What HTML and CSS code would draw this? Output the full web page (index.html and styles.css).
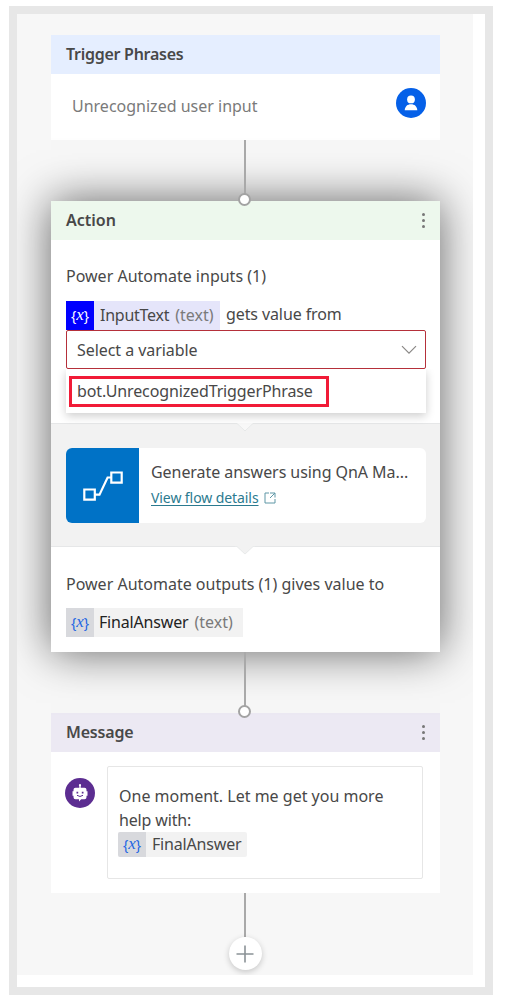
FILE: index.html
```
<!DOCTYPE html>
<html lang="en">
<head>
<meta charset="utf-8">
<title>Authoring canvas</title>
<link rel="stylesheet" href="styles.css">
</head>
<body>
<main class="frame">
  <div class="canvas">
    <section class="card trigger">
      <header class="card-head head-blue"><h2 class="t-trigger">Trigger Phrases</h2></header>
      <div class="trigger-body">
        <span class="t-unrec">Unrecognized user input</span>
        <svg class="avatar" viewBox="0 0 30 30"><circle cx="15" cy="15" r="15" fill="#0560e8"/><circle cx="15" cy="11.400" r="3.900" fill="#fff"/><path d="M8.700 22.200c.3-3.900 2.700-6 6.300-6s6 2.100 6.300 6z" fill="#fff"/></svg>
      </div>
    </section>
    <div class="link"><i class="dot"></i></div>
    <section class="card action">
      <header class="card-head head-green"><h2 class="t-action">Action</h2><span class="more"><i></i><i></i><i></i></span></header>
      <div class="inputs">
        <p class="label">Power Automate inputs (1)</p>
        <div class="assign">
          <span class="chip chip-blue"><b class="fx">{<em>x</em>}</b><span class="name t-input">InputText</span><span class="type">(text)</span></span>
          <span class="t-gets">gets value from</span>
        </div>
        <div class="select"><span class="t-select">Select a variable</span><svg class="chevron" viewBox="0 0 16 10"><path d="M1 1.200l7 7 7-7" fill="none" stroke="#8a8886" stroke-width="1.200"/></svg></div>
        <div class="options"><div class="option"><span class="t-bot">bot.UnrecognizedTriggerPhrase</span></div></div>
      </div>
      <div class="flow">
        <svg class="notch" viewBox="0 0 20 9"><path d="M1 0h18l-9 8.500z" fill="#f8f8f8"/><path d="M0 .5h2l8 7.500 8-7.500h2" fill="none" stroke="#e6e8e8"/></svg>
        <div class="flow-card">
          <div class="flow-icon"><svg viewBox="0 0 40 30"><g fill="none" stroke="#fff" stroke-width="2.200"><path d="M1.300 18.500h10.500v10.200h-10.500zM28.300 1.500h10.400v10.200h-10.400z"/><path d="M12 23.700h4.500L24.600 6.500h3.600"/></g></svg></div>
          <div class="flow-text">
            <span class="t-gen">Generate answers using QnA Ma...</span>
            <span class="details"><a class="t-view">View flow details</a><svg class="ext" viewBox="0 0 12 12"><path d="M5 1H1v10h10V7M6 1h5v4.500M11 1L6 6" fill="none" stroke="#5f97a6"/></svg></span>
          </div>
        </div>
        <svg class="notch notch-low" viewBox="0 0 20 9"><path d="M1 0h18l-9 8.500z" fill="#f2f2f2"/><path d="M0 .5h2l8 7.500 8-7.500h2" fill="none" stroke="#e9ebeb"/></svg>
      </div>
      <div class="outputs">
        <p class="label">Power Automate outputs (1) gives value to</p>
        <span class="chip chip-gray"><b class="fx">{<em>x</em>}</b><span class="name t-final">FinalAnswer</span><span class="type">(text)</span></span>
      </div>
    </section>
    <div class="link"><i class="dot"></i></div>
    <section class="card message">
      <header class="card-head head-violet"><h2 class="t-message">Message</h2><span class="more"><i></i><i></i><i></i></span></header>
      <div class="message-body">
        <svg class="bot" viewBox="0 0 30 30"><circle cx="15" cy="15" r="15" fill="#5c2d91"/><path d="M14.300 7h1.400v3h-1.400z" fill="#fff"/><circle cx="15" cy="7.200" r="1.100" fill="#fff"/><path d="M10.500 9.800h9a2 2 0 0 1 2 2v1.500h1v4.500h-1v1.500a2 2 0 0 1-2 2h-3.300L14 23.500v-2.200h-3.500a2 2 0 0 1-2-2v-1.500h-1v-4.500h1v-1.500a2 2 0 0 1 2-2z" fill="#fff"/><path d="M11.500 13.800h1.700v1.700h-1.700zM16.800 13.800h1.700v1.700h-1.700z" fill="#5c2d91"/><path d="M12 17.300q3 2.400 6 0" fill="none" stroke="#5c2d91"/></svg>
        <div class="bubble">
          <span class="t-one">One moment. Let me get you more</span>
          <span class="t-help">help with:</span>
          <span class="chip chip-small"><b class="fx">{<em>x</em>}</b><span class="name t-final">FinalAnswer</span></span>
        </div>
      </div>
    </section>
    <div class="link link-end"></div>
    <div class="add"><svg viewBox="0 0 18 18"><path d="M9 .5v17M.5 9h17" stroke="#8b9296" stroke-width="1.600"/></svg></div>
  </div>
</main>
</body>
</html>
```
FILE: styles.css
```
* { box-sizing: border-box; }
body { margin: 0; background: #fff; color: #484848; font-family: "Noto Sans", "Open Sans", sans-serif; font-size: 16px; line-height: 24px; white-space: nowrap; }
h2, p { margin: 0; }
svg { display: block; }
.frame { width: 484px; height: 989px; margin: 6px 0 0 9px; border: 8px solid #e7e7e7; }
.canvas { width: 456px; height: 961px; padding: 21px 33px 0 34px; background: #f7f7f7; overflow: hidden; display: flex; flex-direction: column; }
.card { background: #fff; width: 389px; flex: none; }
.card-head { height: 39px; padding: 0 15px 1px; display: flex; align-items: center; justify-content: space-between; }
.card-head h2 { font-size: 16px; font-weight: 600; }
.t-trigger { letter-spacing: -.27px; }
.t-message { letter-spacing: -.18px; }
.t-input { letter-spacing: -.25px; }
.t-gets { letter-spacing: -.1px; }
.t-select { letter-spacing: -.06px; }
.t-bot { letter-spacing: -.13px; }
.t-gen { letter-spacing: -.06px; }
.t-help { letter-spacing: -.15px; }
.t-final { letter-spacing: -.18px; }
.head-blue { background: #e5eeff; }
.head-green { background: #edf8ed; }
.head-violet { background: #ece9f3; }
.trigger { height: 105px; }
.trigger-body { display: flex; justify-content: space-between; padding: 14px 14px 0 21px; color: #7a7a7a; }
.trigger-body span { padding-top: 6px; }
.avatar { width: 30px; height: 30px; }
.link { height: 61px; flex: none; width: 2px; margin-left: 193px; background: #a9a9a9; position: relative; z-index: 2; }
.dot { position: absolute; left: -6px; bottom: -5px; width: 13px; height: 13px; border: 2px solid #a3a3a3; border-radius: 50%; background: #fff; }
.more { display: flex; flex-direction: column; gap: 3px; }
.more i { width: 3px; height: 3px; border-radius: 50%; background: #777; }
.action { height: 451px; box-shadow: 0 0 42px rgba(0, 0, 0, .6); position: relative; }
.inputs { height: 183px; padding: 24px 14px 0 15px; }
.assign { display: flex; align-items: center; gap: 6px; margin-top: 13px; }
.t-gets { padding-bottom: 3px; }
.chip { display: inline-flex; align-items: center; height: 29px; }
.fx { align-self: stretch; width: 28px; display: grid; grid-auto-flow: column; place-content: center; font: 14px/1 "Noto Sans", sans-serif; }
.fx em { font-family: "Liberation Serif", serif; font-size: 17px; line-height: 12px; }
.chip .name, .chip .type { margin-left: 6px; padding-bottom: 2px; }
.chip .type { color: #7a7a7a; }
.chip-blue { width: 154px; background: #e5e5fa; }
.chip-blue .fx { background: #00f; color: #fff; }
.select { height: 39px; border: 1px solid #b5303a; border-radius: 2px; padding: 0 8px 0 10px; display: flex; align-items: center; justify-content: space-between; }
.chevron { width: 16px; height: 10px; }
.options { position: relative; height: 44px; background: #fff; padding: 7px 3px; box-shadow: 0 3px 9px rgba(0, 0, 0, .2); clip-path: inset(0 -14px -16px -14px); z-index: 3; }
.option { width: 260px; height: 31px; border: 3px solid #f11b37; padding: 0 0 2px 5px; display: flex; align-items: center; }
.flow { position: relative; height: 124px; padding: 24px 14px 0 15px; background: #f2f2f2; border-top: 1px solid #e6e7e8; border-bottom: 1px solid #e6e7e8; }
.notch { position: absolute; left: 184px; top: -1px; width: 20px; height: 9px; }
.notch-low { top: 122px; }
.flow-card { height: 75px; background: #fff; border-radius: 6px; display: flex; overflow: hidden; }
.flow-icon { width: 73px; background: #0072c6; display: grid; place-items: center; }
.flow-icon svg { width: 40px; height: 30px; }
.flow-text { padding: 12px 0 0 12px; display: flex; flex-direction: column; gap: 2px; }
.details { display: flex; align-items: center; gap: 5px; font-size: 14px; letter-spacing: -.08px; }
.t-view { color: #2b7a8f; text-decoration: underline; text-underline-offset: 2px; }
.ext { width: 12px; height: 12px; }
.outputs { padding: 25px 15px 0; }
.outputs .chip { margin-top: 12px; width: 177px; }
.chip-gray, .chip-small { background: #f2f2f2; }
.chip-gray .name { color: #222; margin-left: 5px; }
.chip-gray .fx, .chip-small .fx { background: #d8d9dd; color: #2266e3; }
.message { height: 180px; }
.message-body { display: flex; gap: 12px; padding: 14px 17px 0 14px; align-items: flex-start; }
.bot { width: 30px; height: 30px; margin-top: 12px; }
.bubble { flex: 1; height: 113px; border: 1.500px solid #e6e6e6; border-radius: 2px; padding: 17px 0 0 10px; display: flex; flex-direction: column; align-items: flex-start; }
.t-one, .t-help { margin-left: 1px; }
.chip-small { height: 25px; width: 129px; border-radius: 2px; overflow: hidden; }
.link-end { height: 44px; }
.add { width: 33px; height: 33px; flex: none; margin-left: 177.500px; border-radius: 50%; background: #fff; box-shadow: 0 2px 6px rgba(0, 0, 0, .2); display: grid; place-items: center; position: relative; z-index: 3; }
.add svg { width: 18px; height: 18px; }
```
